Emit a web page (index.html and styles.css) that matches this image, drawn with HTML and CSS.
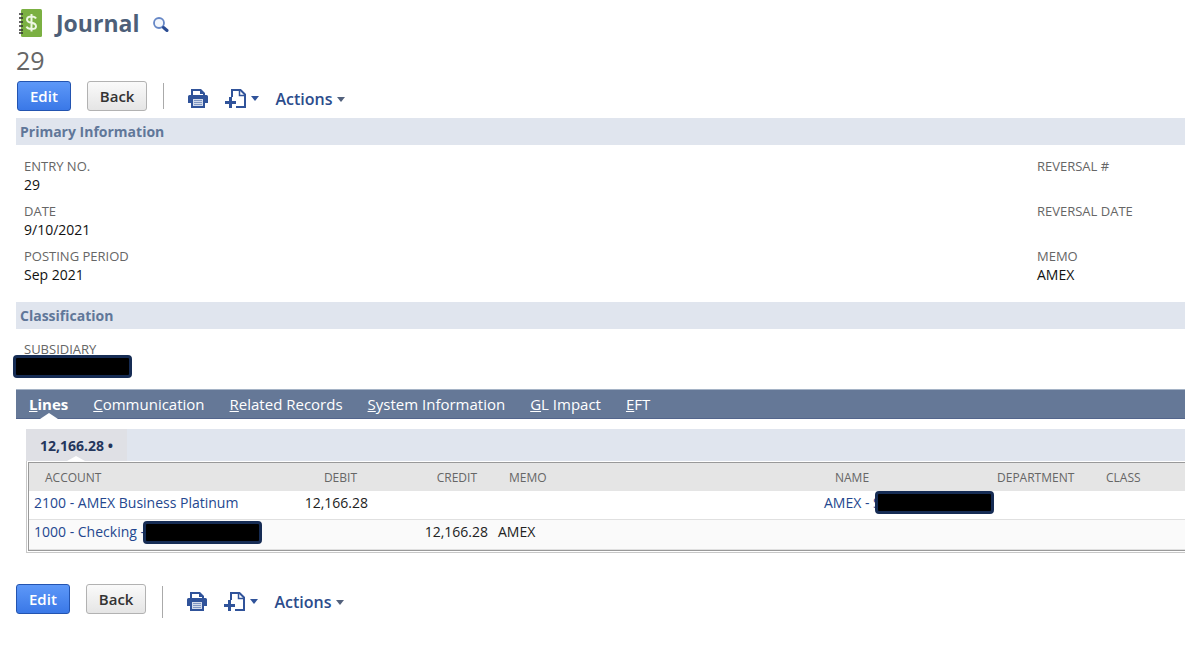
FILE: index.html
```html
<!DOCTYPE html>
<html lang="en">
<head>
<meta charset="utf-8">
<title>Journal 29</title>
<link rel="stylesheet" href="styles.css">
</head>
<body>
<svg class="defs" aria-hidden="true">
  <symbol id="printer" viewBox="0 0 20 19">
    <path fill="#30539a" fill-rule="evenodd" d="M3 0H13L17 4V6H18.500Q20 6 20 7.500V14H17V19H3V14H0V7.500Q0 6 1.500 6H3ZM5 2V6H15V5H12V2ZM5 10V17H15V10Z"/>
    <path fill="#d3dbea" d="M5 10H15V17H5Z"/>
    <path stroke="#7f96c2" d="M6 11.500H14M6 13.500H14M6 15.500H14"/>
  </symbol>
  <symbol id="newdoc" viewBox="0 0 22 19">
    <path fill="none" stroke="#30539a" stroke-width="2" d="M7 8V1H15.500L20 5.500V18H11"/>
    <path fill="none" stroke="#30539a" stroke-width="1.500" d="M14.500 1V6.500H20"/>
    <path fill="#30539a" d="M4 8H7V12H11V15H7V19H4V15H0V12H4Z"/>
  </symbol>
</svg>
<main class="page">
  <header class="head">
    <svg class="book" viewBox="0 0 24 28" aria-hidden="true">
      <rect x="3" width="21" height="28" rx="1.500" fill="#7bb042"/>
      <path stroke="#333" stroke-width="1.600" d="M1 5H5M1 9H5M1 13H5M1 17H5M1 21H5M1 24H5"/>
      <path fill="none" stroke="#eef7e4" stroke-width="2" d="M18 9.500Q17 7.500 13.500 7.500Q9 7.500 9 10.500Q9 13 13.500 13.800Q18 14.500 18 17.500Q18 20 13.500 20Q9.500 20 8.500 17.700M13.500 5V22.500"/>
    </svg>
    <h1 class="title">Journal</h1>
    <svg class="lens" viewBox="0 0 16 16" aria-hidden="true">
      <circle cx="6" cy="6" r="5" fill="#f3f7fd" stroke="#6687c6" stroke-width="1.800"/>
      <path stroke="#2a4c93" stroke-width="3" stroke-linecap="round" d="M10.500 10.500L14 13.500"/>
    </svg>
  </header>
  <div class="record">29</div>

  <div class="toolbar toolbar-top">
    <button class="btn primary">Edit</button>
    <button class="btn">Back</button>
    <span class="sep"></span>
    <button class="tool" aria-label="Print"><svg class="print"><use href="#printer"/></svg></button>
    <button class="tool" aria-label="New"><svg class="doc"><use href="#newdoc"/></svg><i class="caret"></i></button>
    <button class="tool actions">Actions<i class="caret gray"></i></button>
  </div>

  <h2 class="band">Primary Information</h2>
  <div class="fields">
    <dl class="col">
      <dt>ENTRY NO.</dt><dd>29</dd>
      <dt>DATE</dt><dd>9/10/2021</dd>
      <dt>POSTING PERIOD</dt><dd>Sep 2021</dd>
    </dl>
    <dl class="col side">
      <dt>REVERSAL #</dt><dd></dd>
      <dt>REVERSAL DATE</dt><dd></dd>
      <dt>MEMO</dt><dd>AMEX</dd>
    </dl>
  </div>

  <h2 class="band">Classification</h2>
  <dl class="fields class-fields">
    <dt>SUBSIDIARY</dt><dd class="anchor"><span class="redact under"></span></dd>
  </dl>

  <nav class="tabs">
    <a class="on" href="#lines"><u>L</u>ines</a>
    <a href="#communication"><u>C</u>ommunication</a>
    <a href="#related"><u>R</u>elated Records</a>
    <a href="#system"><u>S</u>ystem Information</a>
    <a href="#gl"><u>G</u>L Impact</a>
    <a href="#eft"><u>E</u>FT</a>
  </nav>

  <section class="lines" id="lines">
    <div class="subtabs"><a class="subtab" href="#lines">12,166.28 •</a></div>
    <div class="frame">
      <table class="grid">
        <colgroup><col class="c-account"><col class="c-amount"><col class="c-amount"><col><col class="c-name"><col class="c-dept"><col class="c-class"></colgroup>
        <thead>
          <tr><th>ACCOUNT</th><th class="num">DEBIT</th><th class="num">CREDIT</th><th>MEMO</th><th>NAME</th><th>DEPARTMENT</th><th>CLASS</th></tr>
        </thead>
        <tbody>
          <tr><td><a href="#a2100">2100 - AMEX Business Platinum</a></td><td class="num">12,166.28</td><td></td><td></td><td><span class="anchor"><a href="#name">AMEX - S</a><span class="redact cover"></span></span></td><td></td><td></td></tr>
          <tr><td><span class="anchor"><a href="#a1000">1000 - Checking -</a><span class="redact after"></span></span></td><td></td><td class="num">12,166.28</td><td>AMEX</td><td></td><td></td><td></td></tr>
        </tbody>
      </table>
    </div>
  </section>

  <div class="toolbar toolbar-bottom">
    <button class="btn primary">Edit</button>
    <button class="btn">Back</button>
    <span class="sep"></span>
    <button class="tool" aria-label="Print"><svg class="print"><use href="#printer"/></svg></button>
    <button class="tool" aria-label="New"><svg class="doc"><use href="#newdoc"/></svg><i class="caret"></i></button>
    <button class="tool actions">Actions<i class="caret gray"></i></button>
  </div>
</main>
</body>
</html>
```
FILE: styles.css
```css
* { box-sizing: border-box; }
body {
  margin: 0;
  background: #fff;
  color: #222;
  font: 14px/18px "Open Sans", "Noto Sans", sans-serif;
}
.defs { position: absolute; width: 0; height: 0; }
.page { padding: 8px 19px 0 16px; }
a { color: #24478f; text-decoration: none; }

.head { display: flex; align-items: center; height: 30px; padding-left: 2px; }
.book { width: 24px; height: 28px; }
.title { margin: 0 14px; font-size: 23px; line-height: 30px; font-weight: 700; color: #4d5f79; }
.lens { width: 16px; height: 16px; margin-top: 4px; }
.record { margin-top: 5px; font-size: 25px; line-height: 34px; color: #666; }

.toolbar { display: flex; align-items: flex-start; }
.toolbar-top { height: 41px; padding: 4px 0 0 1px; }
.toolbar-bottom { padding-top: 31px; }
.btn {
  height: 30px;
  padding: 0 12px;
  border: 1px solid #b2b2b2;
  border-radius: 3px;
  background: linear-gradient(#fafafa, #e5e5e5);
  color: #333;
  font: 600 15px/28px "Open Sans", sans-serif;
}
.btn.primary {
  margin-right: 16px;
  border-color: #2354b0;
  background: linear-gradient(#5d98f8, #3a78e7);
  color: #fff;
}
.sep { width: 1px; height: 26px; margin: 2px 24px 0 16px; background: #aaa; }
.toolbar-bottom .sep { height: 32px; }
.tool {
  display: flex;
  align-items: center;
  height: 20px;
  margin-top: 7px;
  padding: 0;
  border: 0;
  background: none;
  color: #2c4c8c;
  font: 600 16px/20px "Open Sans", sans-serif;
}
.print { width: 20px; height: 19px; margin-right: 17px; }
.doc { width: 22px; height: 19px; }
.caret {
  width: 8px;
  margin-left: 4px;
  border: 4px solid transparent;
  border-top: 5px solid #30539a;
  border-bottom: 0;
}
.caret.gray { border-top-color: #52617c; }
.actions { margin: 8px 0 0 16px; }

.band {
  margin: 0;
  padding: 0 4px;
  background: #e0e5ee;
  color: #607799;
  font-size: 14px;
  line-height: 27px;
  font-weight: 700;
}
.fields { display: flex; height: 157px; margin: 0; padding: 13px 8px 0; }
.col { flex: 1; margin: 0; }
.side { flex: 0 0 140px; }
dt { height: 18px; color: #666; font-size: 13px; line-height: 16px; }
dd { height: 18px; margin: 0 0 9px; line-height: 18px; color: #111; }
.class-fields { display: block; height: 60px; padding-top: 12px; }

.anchor { position: relative; }
.redact {
  position: absolute;
  width: 119px;
  height: 23px;
  border: 3px solid #162c54;
  border-radius: 4px;
  background: #000;
}
.under { left: -11px; top: -4px; }
.cover { left: 51px; top: -2px; }
.after { left: 109px; top: -1px; }

.tabs {
  display: flex;
  gap: 25px;
  height: 30px;
  padding: 0 13px;
  border-top: 1px solid #a5b3c6;
  border-bottom: 1px solid #53658c;
  background: #657897;
  font-size: 15px;
  line-height: 28px;
}
.tabs a { position: relative; color: #fff; white-space: nowrap; }
.tabs .on { font-weight: 700; }
.on::after, .subtab::after {
  content: "";
  position: absolute;
  left: 50%;
  bottom: -1px;
  margin-left: -9px;
  border: 9px solid transparent;
  border-top: 0;
  border-bottom: 6px solid #fff;
}

.lines { padding: 10px 0 0 10px; }
.subtabs { display: flex; height: 32px; background: #e0e5ee; }
.subtab {
  position: relative;
  padding: 0 14px;
  background: #dfe0e5;
  color: #24365c;
  font-weight: 700;
  line-height: 34px;
}
.subtab::after { bottom: 0; border-bottom-width: 5px; }
.frame { border: solid #c8c8c8; border-width: 0 0 1px 1px; padding: 1px 0 1px 1px; }
.grid {
  width: 100%;
  table-layout: fixed;
  border-collapse: separate;
  border-spacing: 0;
  border: solid #999;
  border-width: 1px 0 1px 1px;
}
.c-account { width: 224px; }
.c-amount { width: 120px; }
.c-name { width: 162px; }
.c-dept { width: 109px; }
.c-class { width: 95px; }
th {
  height: 28px;
  padding: 2px 16px 0;
  background: #e5e5e5;
  color: #666;
  font-size: 12px;
  line-height: 18px;
  font-weight: 400;
  text-align: left;
}
td { height: 29px; padding: 0 5px 4px; border-bottom: 1px solid #e0e0e0; white-space: nowrap; }
tbody tr:last-child td { height: 30px; padding-bottom: 5px; background: #fafafa; }
.num { text-align: right; }
```
